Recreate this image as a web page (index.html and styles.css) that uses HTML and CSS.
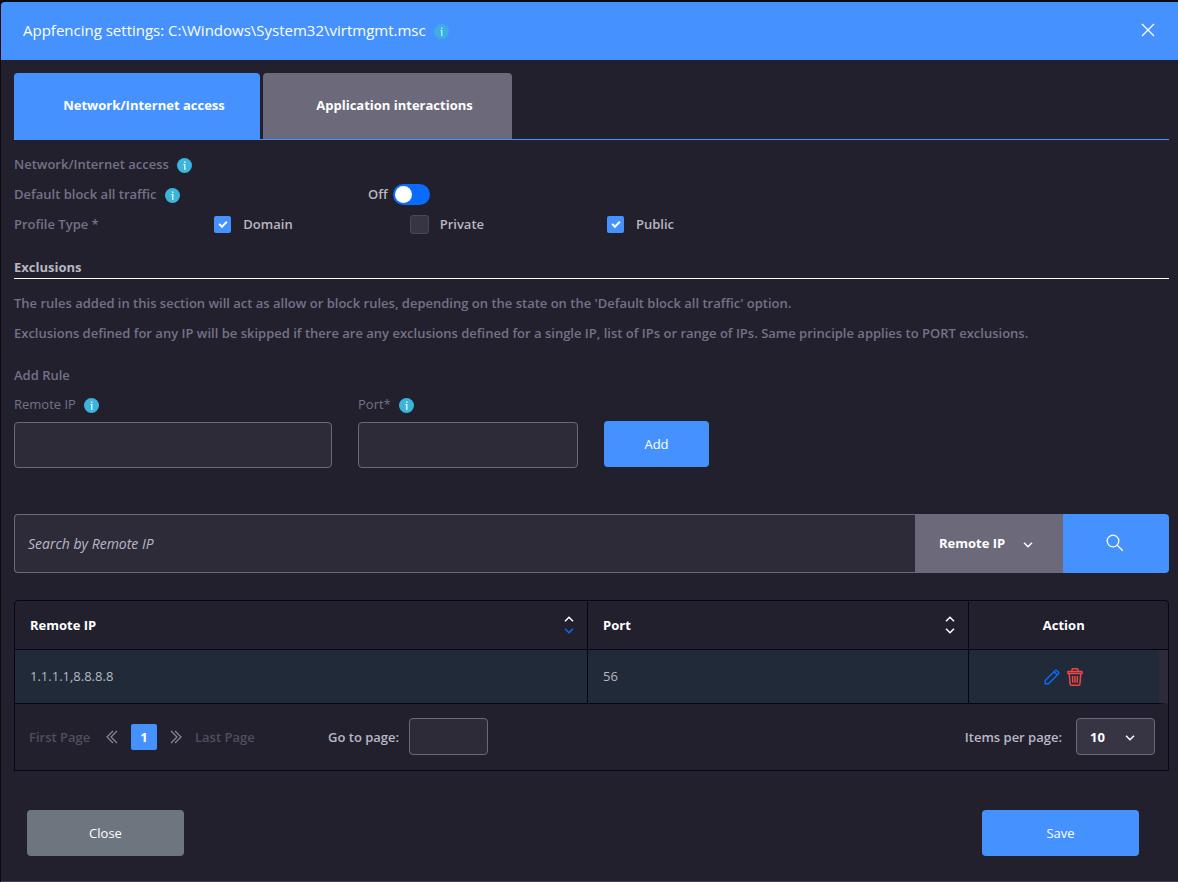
FILE: index.html
```html
<!DOCTYPE html>
<html lang="en">
<head>
    <meta charset="UTF-8">
    <meta name="viewport" content="width=device-width, initial-scale=1.0">
    <title>Appfencing settings</title>
    <link rel="stylesheet" href="styles.css">
</head>
<body>
    <!-- Shared icons -->
    <svg class="sprite" aria-hidden="true">
        <symbol id="icon-info" viewBox="0 0 15 15">
            <circle cx="7.5" cy="7.5" r="7.5" fill="#3bb5dc"/>
            <path d="M7 3.5h1.5V5H7zM6.300 6h2.200v6H7V7h-.7z" fill="#d9f3fa"/>
        </symbol>
        <symbol id="icon-chevron" viewBox="0 0 10 6">
            <path d="M1 .8l4 4 4-4" fill="none" stroke="currentColor" stroke-width="1.5"/>
        </symbol>
    </svg>

    <div class="modal">
        <header class="modal-header">
            <h1>Appfencing settings: C:\Windows\System32\virtmgmt.msc</h1>
            <svg class="info"><use href="#icon-info"/></svg>
            <button type="button" class="close-icon" aria-label="Close dialog">
                <svg width="14" height="14" viewBox="0 0 14 14"><path d="M1 1l12 12M13 1L1 13" stroke="#fff" stroke-width="1.3"/></svg>
            </button>
        </header>

        <main>
            <nav class="tabs">
                <button type="button" class="tab active">Network/Internet access</button>
                <button type="button" class="tab">Application interactions</button>
            </nav>

            <section class="settings">
                <div class="row">Network/Internet access <svg class="info"><use href="#icon-info"/></svg></div>
                <div class="row">
                    <span class="row-label">Default block all traffic <svg class="info"><use href="#icon-info"/></svg></span>
                    <label class="light" for="blockAll">Off</label>
                    <input type="checkbox" class="switch" id="blockAll">
                </div>
                <div class="profiles">
                    <span>Profile Type *</span>
                    <label class="light"><input type="checkbox" class="check" checked>Domain</label>
                    <label class="light"><input type="checkbox" class="check">Private</label>
                    <label class="light"><input type="checkbox" class="check" checked>Public</label>
                </div>
            </section>

            <h2 class="light">Exclusions</h2>
            <p>The rules added in this section will act as allow or block rules, depending on the state on the 'Default block all traffic' option.</p>
            <p>Exclusions defined for any IP will be skipped if there are any exclusions defined for a single IP, list of IPs or range of IPs. Same principle applies to PORT exclusions.</p>

            <h3>Add Rule</h3>
            <form class="rule-form">
                <div class="field field-ip">
                    <label for="remoteIp">Remote IP <svg class="info"><use href="#icon-info"/></svg></label>
                    <input type="text" id="remoteIp">
                </div>
                <div class="field field-port">
                    <label for="port">Port* <svg class="info"><use href="#icon-info"/></svg></label>
                    <input type="text" id="port">
                </div>
                <button type="button" class="btn btn-add">Add</button>
            </form>

            <form class="search">
                <input type="text" placeholder="Search by Remote IP" aria-label="Search by Remote IP">
                <div class="select-wrap search-by">
                    <select aria-label="Search field">
                        <option>Remote IP</option>
                        <option>Port</option>
                    </select>
                    <svg class="chevron"><use href="#icon-chevron"/></svg>
                </div>
                <button type="button" aria-label="Search">
                    <svg width="18" height="18" viewBox="0 0 18 18" fill="none" stroke="#fff" stroke-width="1.3"><circle cx="7" cy="7" r="5.8"/><path d="M11.2 11.2l5.6 5.6"/></svg>
                </button>
            </form>

            <div class="grid">
                <table>
                    <thead>
                        <tr>
                            <th class="col-ip">
                                <div class="sortable">Remote IP
                                    <svg width="10" height="18" viewBox="0 0 10 18" fill="none" stroke-width="1.5"><path d="M1 5.2l4-4 4 4" stroke="#fff"/><path d="M1 12.8l4 4 4-4" stroke="#0a6cff"/></svg>
                                </div>
                            </th>
                            <th class="col-port">
                                <div class="sortable">Port
                                    <svg width="10" height="18" viewBox="0 0 10 18" fill="none" stroke="#fff" stroke-width="1.5"><path d="M1 5.2l4-4 4 4M1 12.8l4 4 4-4"/></svg>
                                </div>
                            </th>
                            <th class="col-action">Action</th>
                        </tr>
                    </thead>
                    <tbody>
                        <tr>
                            <td>1.1.1.1,8.8.8.8</td>
                            <td>56</td>
                            <td class="col-action">
                                <div class="actions">
                                    <button type="button" aria-label="Edit">
                                        <svg width="16" height="16" viewBox="0 0 16 16" fill="none" stroke="#0a6cff" stroke-width="1.4" stroke-linejoin="round"><path d="M1.200 14.800v-3.300L11 1.700q1-.9 2 0l1.300 1.300q.9 1 0 2L4.500 14.800zM10 2.700l3.300 3.300"/></svg>
                                    </button>
                                    <button type="button" aria-label="Delete">
                                        <svg width="16" height="18" viewBox="0 0 16 18" fill="none" stroke="#f04545" stroke-width="1.5" stroke-linejoin="round"><path d="M5 3V1.800q0-1 1-1h4q1 0 1 1V3M1 3.500h14v2H1zM2.200 5.500l.9 10.500q.1 1.200 1.300 1.200h7.200q1.200 0 1.300-1.200l.9-10.500"/><path d="M5.500 8l.3 6.800M8 8v6.800M10.500 8l-.3 6.800"/></svg>
                                    </button>
                                </div>
                            </td>
                        </tr>
                    </tbody>
                </table>

                <div class="pager">
                    <button type="button" class="page-link">First Page</button>
                    <button type="button" class="page-arrow" aria-label="Previous page">
                        <svg width="12" height="14" viewBox="0 0 12 14" fill="none" stroke="#7d879c" stroke-width="1.300"><path d="M7 1L1 7l6 6M11 1L5 7l6 6"/></svg>
                    </button>
                    <button type="button" class="page-current">1</button>
                    <button type="button" class="page-arrow" aria-label="Next page">
                        <svg width="12" height="14" viewBox="0 0 12 14" fill="none" stroke="#7d879c" stroke-width="1.300"><path d="M5 1l6 6-6 6M1 1l6 6-6 6"/></svg>
                    </button>
                    <button type="button" class="page-link">Last Page</button>
                    <label class="goto" for="goto">Go to page:</label>
                    <input type="text" class="goto-input" id="goto">
                    <label class="per-page" for="perPage">Items per page:</label>
                    <div class="select-wrap per-page-select">
                        <select id="perPage">
                            <option>10</option>
                            <option>25</option>
                            <option>50</option>
                        </select>
                        <svg class="chevron"><use href="#icon-chevron"/></svg>
                    </div>
                </div>
            </div>
        </main>

        <footer>
            <button type="button" class="btn btn-close">Close</button>
            <button type="button" class="btn btn-save">Save</button>
        </footer>
    </div>
</body>
</html>
```
FILE: styles.css
```css
* {
    box-sizing: border-box;
}
body {
    margin: 0;
    padding: 2px 0 0 1px;
    background: #0b0b10;
    color: #757188;
    font: 600 13px/20px "Open Sans", sans-serif;
}
button, input, select {
    margin: 0;
    border: none;
    font: inherit;
    color: #fff;
}
button {
    padding: 0;
    background: none;
    cursor: pointer;
}
svg {
    flex: none;
}
h1, h2, h3, p {
    margin: 0;
    font-size: 13px;
    font-weight: 600;
}
input[type="text"] {
    min-width: 0;
    padding: 0 13px;
    background: #2d2b38;
    border: 1px solid #6b697a;
    border-radius: 4px;
}
.sprite {
    display: none;
}
.info {
    width: 15px;
    height: 15px;
    margin: 2px 0 0 8px;
}
.light {
    color: #b9b7c0;
}

/* Modal */
.modal {
    background: #22202d;
    border-bottom: 1px solid #3a4656;
    border-radius: 4px 0 0 0;
}
.modal-header {
    display: flex;
    align-items: center;
    height: 58px;
    padding: 0 23px 2px 22px;
    background: #4592ff;
    border-radius: 4px 0 0 0;
}
.modal-header h1 {
    color: #fff;
    font-size: 15px;
    font-weight: 400;
}
.modal-header .info {
    opacity: 0.8;
}
.close-icon {
    display: flex;
    margin-left: auto;
}
main {
    padding: 13px 9px 0 13px;
}

/* Tabs */
.tabs {
    display: flex;
    gap: 3px;
    border-bottom: 1px solid #4592ff;
}
.tab {
    height: 66px;
    min-width: 249px;
    padding: 0 30px 2px 44px;
    background: #6b697a;
    border-radius: 4px 4px 0 0;
    font-weight: 700;
}
.tab.active {
    min-width: 246px;
    background: #4592ff;
}

/* Settings */
.settings {
    padding: 9px 0 18px;
}
.row, .row-label, .profiles label {
    display: flex;
    align-items: center;
}
.row {
    height: 30px;
}
.row-label {
    width: 354px;
}
.switch {
    appearance: none;
    display: flex;
    align-items: center;
    width: 37px;
    height: 21px;
    margin-left: 5px;
    padding: 0 2px;
    background: #0a6cff;
    border-radius: 11px;
}
.switch::before {
    content: "";
    width: 17px;
    height: 17px;
    background: #fff;
    border-radius: 50%;
}
.profiles {
    display: grid;
    grid-template-columns: repeat(4, 17%);
    align-items: center;
    height: 30px;
}
.check {
    appearance: none;
    display: grid;
    place-items: center;
    width: 19px;
    height: 19px;
    margin: 0 11px 0 3px;
    background: #373543;
    border: 1px solid #4a4856;
    border-radius: 3px;
}
.check:checked {
    background: #4592ff;
    background-clip: padding-box;
    border-color: transparent;
}
.check:checked::before {
    content: "";
    box-sizing: border-box;
    width: 8px;
    height: 5px;
    margin-bottom: 2px;
    border: solid #fff;
    border-width: 0 0 2px 2px;
    transform: rotate(-45deg);
}
h2.light {
    margin-bottom: 14px;
    padding-bottom: 1px;
    border-bottom: 1px solid #fff;
    font-weight: 700;
}
p {
    margin-bottom: 10px;
}
h3 {
    margin-top: 22px;
}

/* Add rule */
.rule-form {
    display: flex;
    align-items: flex-end;
    gap: 26px;
    margin-top: 9px;
}
.field {
    display: flex;
    flex-direction: column;
    gap: 8px;
}
.field label {
    display: flex;
    align-items: center;
    font-weight: 400;
}
.field input {
    height: 46px;
}
.field-ip {
    width: 318px;
}
.field-port {
    width: 220px;
}
.btn {
    height: 46px;
    background: #4592ff;
    border-radius: 4px;
    font-weight: 400;
}
.btn-add {
    width: 105px;
    margin-bottom: 1px;
}

/* Search */
.search {
    display: flex;
    height: 59px;
    margin-top: 46px;
}
.search input {
    flex: 1;
    border-right: none;
    border-radius: 4px 0 0 4px;
    font-size: 14px;
    font-weight: 400;
}
.search input::placeholder {
    color: #b9b7c8;
    font-style: italic;
}
.search > button {
    display: grid;
    place-items: center;
    width: 106px;
    padding: 0 2px 2px 0;
    background: #4592ff;
    border-radius: 0 4px 4px 0;
}
.select-wrap {
    position: relative;
}
.select-wrap select {
    appearance: none;
    width: 100%;
    height: 100%;
    font-weight: 700;
}
.chevron {
    position: absolute;
    top: calc(50% - 2px);
    right: 30px;
    width: 10px;
    height: 6px;
    color: #fff;
    pointer-events: none;
}
.search-by {
    width: 148px;
}
.search-by select {
    padding: 0 24px 2px;
    background: #6b697a;
}

/* Rules table */
.grid {
    margin-top: 27px;
    border: 1px solid #05041a;
    border-radius: 4px 4px 0 0;
}
table {
    width: 100%;
    table-layout: fixed;
    border-collapse: separate;
    border-spacing: 0;
}
th, td {
    padding: 0 15px;
    border-bottom: 1px solid #05041a;
    border-right: 1px solid #05041a;
    text-align: left;
}
th {
    height: 49px;
    color: #fff;
    font-weight: 700;
}
td {
    height: 54px;
    padding-bottom: 2px;
    background: #202a38;
    color: #b9b7c0;
    font-weight: 400;
}
.col-ip {
    width: 49.7%;
}
.col-port {
    width: 33%;
}
th.col-action {
    padding: 0 9px 0 0;
    border-right: none;
    text-align: center;
}
td.col-action {
    padding: 0;
    border-right: 9px solid #2d2b38;
}
.sortable {
    display: flex;
    align-items: center;
    justify-content: space-between;
    margin-right: -2px;
}
.actions {
    display: flex;
    justify-content: center;
    gap: 7px;
}
.actions button {
    display: flex;
    align-items: center;
}

/* Pagination */
.pager {
    display: flex;
    align-items: center;
    height: 66px;
    padding: 0 13px 1px 14px;
    color: #b9b7c8;
}
.page-link {
    min-width: 64px;
    color: #4e4f5f;
    text-align: left;
}
.page-arrow {
    display: flex;
    margin: 0 13px;
}
.page-current {
    width: 26px;
    height: 26px;
    background: #4592ff;
    border-radius: 2px;
    font-weight: 700;
}
.goto {
    margin-left: 69px;
}
.goto-input {
    width: 79px;
    height: 37px;
    margin-left: 10px;
}
.per-page {
    margin-left: auto;
}
.per-page-select {
    width: 79px;
    height: 37px;
    margin-left: 14px;
}
.per-page-select select {
    padding: 0 13px;
    background: #373543;
    border: 1px solid #6b697a;
    border-radius: 4px;
}
.per-page-select .chevron {
    right: 20px;
}

footer {
    display: flex;
    justify-content: space-between;
    padding: 39px 39px 25px 26px;
}
footer .btn {
    width: 157px;
}
.btn-close {
    background: #6d757f;
}
```
